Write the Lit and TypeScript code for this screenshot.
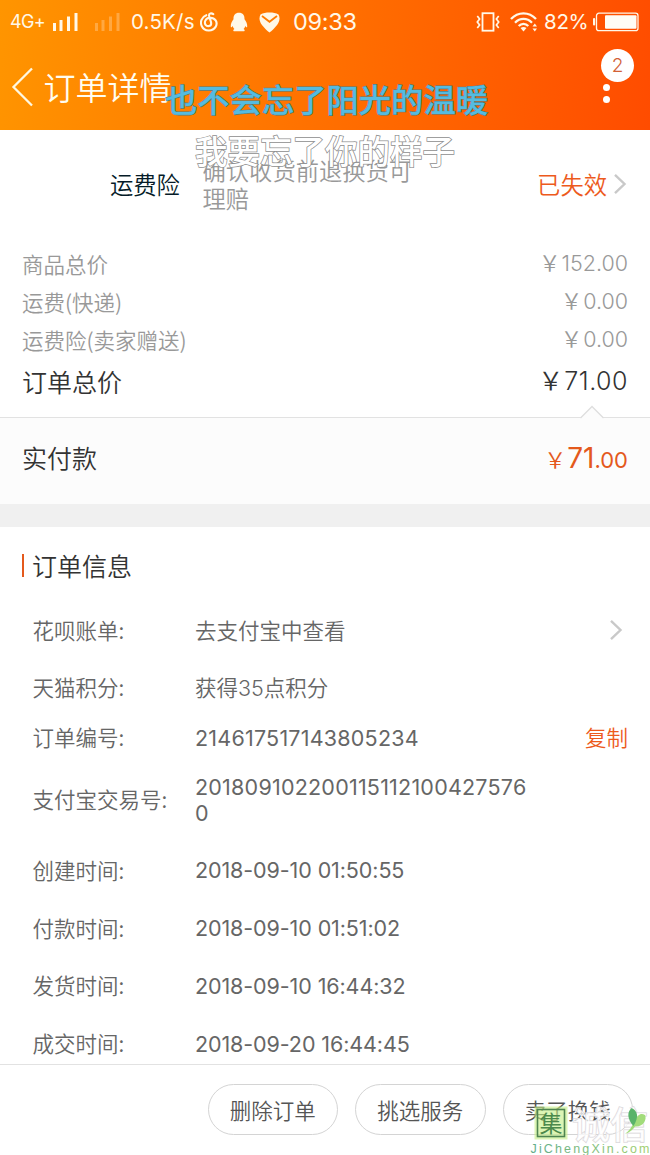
import { LitElement, html, css } from "lit";
import { customElement } from "lit/decorators.js";

interface InfoRow { label: string; value: string; size: string; kind?: string; action?: "arrow" | "copy"; }

const PRICES = [
  { label: "商品总价", value: "152.00" },
  { label: "运费(快递)", value: "0.00" },
  { label: "运费险(卖家赠送)", value: "0.00" },
];

const INFO: InfoRow[] = [
  { label: "花呗账单:", value: "去支付宝中查看", size: "normal", action: "arrow" },
  { label: "天猫积分:", value: "获得35点积分", size: "normal" },
  { label: "订单编号:", value: "214617517143805234", size: "short", kind: "num", action: "copy" },
  { label: "支付宝交易号:", value: "2018091022001151121004275760", size: "tall", kind: "num" },
  { label: "创建时间:", value: "2018-09-10 01:50:55", size: "normal", kind: "date" },
  { label: "付款时间:", value: "2018-09-10 01:51:02", size: "normal", kind: "date" },
  { label: "发货时间:", value: "2018-09-10 16:44:32", size: "normal", kind: "date" },
  { label: "成交时间:", value: "2018-09-20 16:44:45", size: "normal", kind: "date" },
];

const arrow = html`<svg class="arrow" width="14" height="22" viewBox="0 0 14 22" fill="none" stroke="#c9c9c9" stroke-width="2.4"><path d="M2 1.8 L11.5 11 L2 20.2"/></svg>`;

@customElement("status-bar")
export class StatusBar extends LitElement {
  static styles = css`
    :host { display: flex; height: 44px; align-items: center; justify-content: space-between; padding: 0 11px 0 10px; box-sizing: border-box; color: #fff8e8; font: 400 21px/44px Inter, "Noto Sans CJK SC", sans-serif; }
    .side { display: flex; align-items: center; height: 44px; }
    .net { font-size: 18px; letter-spacing: -0.6px; width: 42px; line-height: 42px; }
    .speed { width: 69px; white-space: nowrap; font-size: 20.500px; letter-spacing: 0.2px; line-height: 46px; }
    .time { font-size: 23.5px; letter-spacing: -0.3px; line-height: 46px; }
    .pct { letter-spacing: -0.3px; width: 49px; font-size: 20.5px; line-height: 46px; }
    .bars { margin-right: 16px; }
    .faint { margin-right: 11px; }
    .cloud { margin-right: 12px; }
    .penguin { margin-right: 11px; }
    .shield { margin-right: 13px; }
    .vibrate { margin-right: 10px; }
    .wifi { margin-right: 6px; }
  `;
  bars(cls: string, opacity: number) {
    return html`<svg class=${cls} width="26" height="20" viewBox="0 0 26 20" fill="#fff8e8" opacity=${opacity}>
      <rect x="1" y="11" width="3" height="8"/><rect x="7.5" y="8" width="3" height="11"/><rect x="15" y="4.500" width="3" height="14.500"/><rect x="22.500" y="1" width="3" height="18"/></svg>`;
  }
  render() {
    return html`
      <div class="side">
        <span class="net">4G+</span>${this.bars("bars", 1)}${this.bars("faint", 0.28)}
        <span class="speed">0.5K/s</span>
        <svg class="cloud" width="18" height="20" viewBox="0 0 18 20" fill="none" stroke="#fff8e8" stroke-width="2.1" stroke-linecap="round">
          <path d="M6.300 3.200 C1.500 5 -.2 10 1.800 14.200 C4.500 19.700 12.500 19.900 15.600 14.900 C18.300 10.100 15 5.500 9.600 5.900 C5.200 6.200 4 10.600 5.600 12.800 C7.200 15 11.100 14.500 11.200 11.400 C11.200 9.500 9.200 5.500 9 3.500 C8.900 1.400 11.300 .7 13.300 2.200"/>
        </svg>
        <svg class="penguin" width="18" height="20" viewBox="0 0 18 20" fill="#fff8e8">
          <path d="M9 .7 C5.200 .7 3.300 3.200 3.500 7.200 C1.800 9.300 .5 12 .8 14.700 C1 15.800 2 14.900 2.700 13.900 C3 15.100 3.600 16.100 4.400 16.900 C2.500 18 3.200 19.300 5 19.300 H13 C14.800 19.300 15.500 18 13.600 16.900 C14.400 16.100 15 15.100 15.300 13.900 C16 14.900 17 15.800 17.200 14.700 C17.500 12 16.200 9.300 14.500 7.200 C14.700 3.200 12.800 .7 9 .7Z"/>
        </svg>
        <svg class="shield" width="21" height="21" viewBox="0 0 21 21">
          <path d="M10.500 .6 C14 .6 17 1.200 19.500 2.500 C21.500 6.500 20.300 10 17.800 13.300 C15.600 16.200 13.200 18.600 10.500 20.500 C7.800 18.600 5.400 16.200 3.200 13.300 C.7 10 -.5 6.500 1.500 2.500 C4 1.200 7 .6 10.500 .6Z" fill="#fff8e8"/>
          <path d="M3 4 L10.500 9.800 L18 4" fill="none" stroke="#ff7c00" stroke-width="1.800"/>
        </svg>
        <span class="time">09:33</span>
      </div>
      <div class="side">
        <svg class="vibrate" width="24" height="20" viewBox="0 0 24 20" fill="none" stroke="#fff8e8">
          <rect x="6.500" y="1.200" width="11" height="17.500" stroke-width="1.800"/>
          <path d="M1.300 4 L3.600 7 L1.300 10 L3.600 13 L1.300 16 M22.700 4 L20.400 7 L22.700 10 L20.400 13 L22.700 16" stroke-width="1.700"/>
        </svg>
        <svg class="wifi" width="28" height="20" viewBox="0 0 28 20" fill="none" stroke="#fff8e8" stroke-width="2.300">
          <path d="M1 7 C8 -.6 19 -.6 26 7"/><path d="M5 10.700 C10 5.600 17 5.600 22 10.700"/><path d="M8.700 14 C11.500 11.100 15.500 11.100 18.300 14"/>
          <path d="M10.500 16 Q13.500 14.200 16.500 16 L13.500 19.500Z" fill="#fff8e8" stroke="none"/>
          <path d="M22.500 14.500 L24.800 11.500 L27 14.500Z M22.500 16.500 L24.800 19.500 L27 16.500Z" fill="#fff8e8" stroke="none"/>
        </svg>
        <span class="pct">82%</span>
        <svg width="46" height="20" viewBox="0 0 46 20">
          <rect x="0" y="6" width="2.200" height="7.500" rx="1" fill="#fff8e8"/>
          <rect x="3.500" y="1.200" width="41.500" height="17.500" rx="2.500" fill="none" stroke="#fff8e8" stroke-width="1.300"/>
          <rect x="12" y="3.200" width="31.500" height="13.500" rx="1" fill="#fffdf5"/>
        </svg>
      </div>`;
  }
}

@customElement("site-watermark")
export class SiteWatermark extends LitElement {
  static styles = css`
    :host { display: block; }
    svg { display: block; overflow: visible; }
    .seal { font: 400 23px "Noto Sans CJK SC", sans-serif; fill: #4c8a4c; }
    .name { font: 500 37px "Noto Sans CJK SC", sans-serif; fill: #ffffff; fill-opacity: .75; stroke: #d8d4d8; stroke-width: 1.2; paint-order: stroke; }
    .site { font: 400 12.5px "Liberation Sans", sans-serif; }
  `;
  render() {
    return html`<svg width="124" height="53" viewBox="0 0 124 53">
      <defs><linearGradient id="g"><stop offset="0" stop-color="#62ad8b"/><stop offset="1" stop-color="#a2cf70"/></linearGradient></defs>
      <rect x="8.500" y="4.500" width="33" height="33" fill="#c5ee83" opacity=".6"/>
      <rect x="11.500" y="7.500" width="27" height="27" fill="none" stroke="#4f8550" stroke-width="1.600"/>
      <text class="seal" x="13.500" y="29.800">集</text>
      <text class="name" x="46" y="36.500" textLength="76" lengthAdjust="spacingAndGlyphs">诚信</text>
      <path d="M108 20 C112 12 115 11 119 13 C121 17 118 25 109 24.500 C107 28 104 30 99 32 C103 29 106 25 108 20Z" fill="#a2dc7b"/>
      <path d="M107.500 24 C101 17 101 10 105.500 6 C112 9 113 15 107.500 24Z" fill="#59b36a"/>
      <text class="site" x="4.500" y="51" fill="url(#g)" textLength="119" lengthAdjust="spacing">JiChengXin.com</text>
    </svg>`;
  }
}

@customElement("app-root")
export class AppRoot extends LitElement {
  static styles = css`
    :host { display: flex; flex-direction: column; position: relative; width: 650px; height: 1155px; overflow: hidden; background: #fff; font-family: Inter, "Noto Sans CJK SC", sans-serif; color: #666; }
    * { box-sizing: border-box; }
    .header { height: 130px; flex: none; background: linear-gradient(97deg, #ff9500 0%, #ff7000 50%, #ff4c00 100%); }
    .nav { display: flex; align-items: center; height: 86px; padding: 0 40px 0 11px; color: #fffdf0; }
    .title { font: 350 32px/48px "Noto Sans CJK SC", sans-serif; margin: -2px 0 0 9.500px; flex: 1; }
    .more { display: flex; flex-direction: column; gap: 5px; padding-top: 13px; }
    .more i { width: 7px; height: 7px; border-radius: 50%; background: #fff; }
    .badge { position: absolute; left: 601px; top: 49px; width: 33px; height: 33px; border-radius: 50%; background: #fff; color: #d26237; font: 300 19px/34px Inter, sans-serif; text-align: center; }
    .danmu { position: absolute; white-space: nowrap; font: 500 32.3px/44px "Noto Sans CJK SC", sans-serif; -webkit-text-stroke: 1.2px #4b7f86; paint-order: stroke fill; color: #55bbe0; }
    .first { left: 165px; top: 76px; }
    .second { left: 195px; top: 128px; font-size: 32.5px; color: #fff; -webkit-text-stroke: 1.5px #8e8e8e; }
    .insurance { display: flex; align-items: center; height: 109px; flex: none; padding: 0 23px 2px 110px; font: 350 23.3px/28px "Noto Sans CJK SC", sans-serif; }
    .ins-name { width: 92.500px; color: #051b28; }
    .ins-text { width: 220px; color: #999; }
    .ins-state { margin-left: auto; color: #ed5a1c; margin-right: 6px; }
    .prices { height: 178px; flex: none; padding: 5px 22px 0; }
    .price { display: flex; justify-content: space-between; height: 38px; align-items: center; line-height: 38px; color: #999; font-size: 21.5px; font-weight: 300; }
    .sum { margin-top: -1px; }
    .cjk { font-family: "Noto Sans CJK SC", sans-serif; font-weight: 350; padding-top: 1px; }
    .total { height: 44px; color: #333; font-size: 25px; }
    .total .sum { letter-spacing: .5px; }
    .yen { font-family: "Noto Sans CJK SC", sans-serif; font-weight: 350; letter-spacing: 0; margin-left: -2px; margin-right: 1px; }
    .pay { position: relative; display: flex; justify-content: space-between; align-items: center; height: 87px; flex: none; padding: 0 22px 6px; border-top: 1px solid #e2e2e2; background: #fcfcfc; color: #333; font-size: 25px; font-weight: 300; }
    .pay .cjk { padding: 0 0 2px; }
    .notch { position: absolute; left: 580px; top: -13px; }
    .amount { color: #e4591c; font-size: 22px; font-weight: 400; }
    .amount b { font-weight: 400; font-size: 28px; }
    .gap { height: 23px; flex: none; background: #f0f0f0; }
    .section { display: flex; align-items: center; height: 75px; flex: none; padding: 2px 0 0 22px; gap: 8px; color: #333; font: 350 25px/36px "Noto Sans CJK SC", sans-serif; }
    .section i { width: 2px; height: 23px; background: #e4591c; }
    .section span { margin-top: -1px; }
    .row { display: flex; align-items: center; flex: none; padding: 0 22px 0 32.500px; font-size: 21.5px; line-height: 25.500px; color: #666; font-weight: 350; }
    .normal { height: 57.700px; }
    .short { height: 41px; }
    .tall { height: 84px; }
    .label { width: 162.500px; font-family: "Noto Sans CJK SC", sans-serif; padding-bottom: 3px; }
    .value { width: 345px; word-break: break-all; margin-top: 1px; }
    .num { font-weight: 400; letter-spacing: .22px; width: 340px; }
    .date { font-weight: 400; letter-spacing: -.1px; margin-top: 0; }
    .copy { margin-left: auto; color: #ed5a1c; font-family: "Noto Sans CJK SC", sans-serif; padding-bottom: 3px; }
    .row .arrow { margin: -2px 5px 0 auto; }
    .footer { position: absolute; left: 0; bottom: 0; width: 650px; height: 91px; display: flex; justify-content: flex-end; gap: 17px; padding: 19px 17px 0 0; border-top: 1px solid #e2e2e2; background: #fff; }
    .btn { width: 130.500px; height: 51px; border: 1px solid #d4d4d4; border-radius: 26px; text-align: center; font: 350 21.5px/49px "Noto Sans CJK SC", sans-serif; color: #555; }
    .mark { position: absolute; left: 526px; bottom: 0; }
  `;
  render() {
    return html`
      <div class="header">
        <status-bar></status-bar>
        <div class="nav">
          <svg width="23" height="40" viewBox="0 0 23 40" fill="none" stroke="#fff8e0" stroke-width="2.300"><path d="M21 1.500 L2.500 20 L21 38.500"/></svg>
          <span class="title">订单详情</span>
          <div class="more"><i></i><i></i></div>
        </div>
      </div>
      <div class="badge">2</div>
      <div class="insurance">
        <span class="ins-name">运费险</span><span class="ins-text">确认收货前退换货可理赔</span>
        <span class="ins-state">已失效</span>${arrow}
      </div>
      <div class="prices">
        ${PRICES.map((p) => html`<div class="price"><span class="cjk">${p.label}</span><span class="sum"><span class="yen">￥</span>${p.value}</span></div>`)}
        <div class="price total"><span class="cjk">订单总价</span><span class="sum"><span class="yen">￥</span>71.00</span></div>
      </div>
      <div class="pay">
        <svg class="notch" width="24" height="14" viewBox="0 0 24 14"><path d="M.5 13 L12 1.500 L23.500 13" fill="#fcfcfc" stroke="#dedede" stroke-width="1.300"/></svg>
        <span class="cjk">实付款</span><span class="amount"><span class="yen">￥</span><b>71</b>.00</span>
      </div>
      <div class="gap"></div>
      <div class="section"><i></i><span>订单信息</span></div>
      ${INFO.map((r) => html`<div class="row ${r.size}"><span class="label">${r.label}</span><span class="value ${r.kind ?? ""}">${r.value}</span>
        ${r.action === "arrow" ? arrow : r.action === "copy" ? html`<span class="copy">复制</span>` : ""}</div>`)}
      <div class="footer"><div class="btn">删除订单</div><div class="btn">挑选服务</div><div class="btn">卖了换钱</div></div>
      <div class="danmu first">也不会忘了阳光的温暖</div>
      <div class="danmu second">我要忘了你的样子</div>
      <site-watermark class="mark"></site-watermark>`;
  }
}
